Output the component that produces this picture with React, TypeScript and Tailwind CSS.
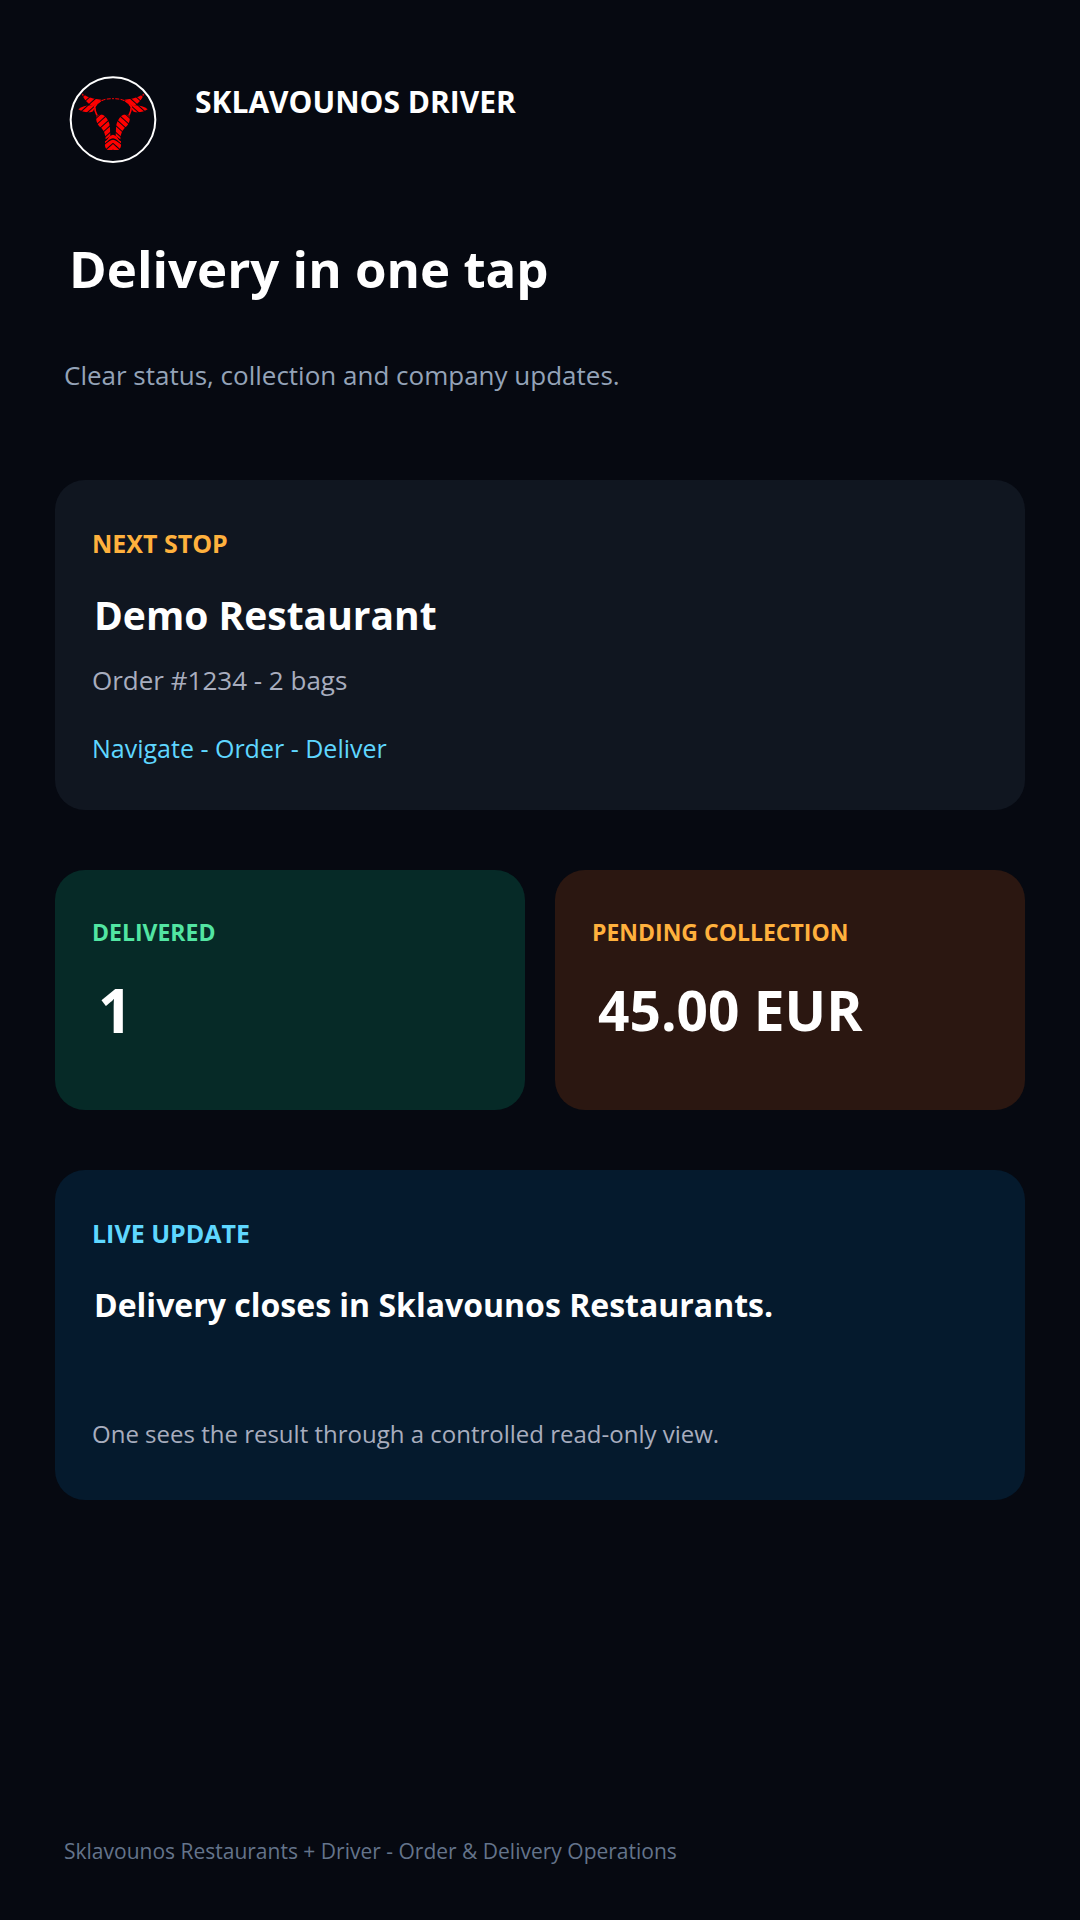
import type { ReactNode } from 'react'

function BullLogo() {
  return (
    <svg viewBox="0 0 264 264" className="size-22 shrink-0" role="img" aria-label="Sklavounos">
      <defs>
        <pattern id="stripes" width="15" height="15" patternUnits="userSpaceOnUse" patternTransform="rotate(-42)">
          <rect width="15" height="12" fill="#ff0000" />
        </pattern>
        <g id="half">
          <path d="M38 52 C50 62 72 70 104 72 C92 77 84 84 80 93 C68 90 60 84 54 78 C46 70 41 62 38 52Z" fill="url(#stripes)" />
          <path d="M28 100 C40 90 60 86 78 89 C77 97 74 103 70 107 C56 111 40 108 28 100Z" fill="url(#stripes)" />
          <path d="M95 74 C86 79 80 85 77 92 C77 102 80 110 84 118" fill="none" stroke="#ff0000" strokeWidth="5" />
          <path d="M98 74 C108 69 120 68 132 68" fill="none" stroke="#ff0000" strokeWidth="3" strokeDasharray="12 4" />
          <path d="M82 122 C90 111 106 114 113 127 C120 138 123 146 123 158 L124 180 L110 190 C109 174 105 164 97 156 C86 147 80 136 82 122Z" fill="url(#stripes)" />
          <path d="M108 196 C116 192 120 178 132 176 V187 C124 188 118 194 108 202Z" fill="#ff0000" />
          <path d="M108 203 C118 198 124 191 132 191 V222 H116 C109 217 107 210 108 203Z" fill="url(#stripes)" />
        </g>
      </defs>
      <circle cx="132" cy="131" r="127" fill="none" stroke="#ffffff" strokeWidth="6" />
      <use href="#half" />
      <use href="#half" transform="matrix(-1 0 0 1 264 0)" />
    </svg>
  )
}

function Card({ className, children }: { className: string, children: ReactNode }) {
  return <section className={`rounded-[30px] px-[37px] ${className}`}>{children}</section>
}

export default function App() {
  return (
    <main className="flex min-h-screen flex-col bg-[#060911] px-[55px] pt-[76px] pb-[51px] font-['Open_Sans','Noto_Sans',sans-serif] text-white">
      <header className="flex gap-[38px] pl-[14px]">
        <BullLogo />
        <p className="pt-2 text-[30px] leading-9 font-bold">SKLAVOUNOS DRIVER</p>
      </header>
      <h1 className="mt-16 pl-[14px] text-[51px] leading-[80px] font-bold">Delivery in one tap</h1>
      <p className="mt-[49px] pl-[9px] text-[26px] leading-9 text-[#94a3b8]">Clear status, collection and company updates.</p>

      <Card className="mt-[87px] bg-[#101620] pt-[45px] pb-11">
        <h2 className="text-[25px] leading-9 font-bold text-[#ffb13d]">NEXT STOP</h2>
        <p className="mt-6 pl-[2px] text-[39px] leading-[60px] font-bold">Demo Restaurant</p>
        <p className="mt-[17px] text-[26px] leading-9 text-[#a8adbe]">Order #1234 - 2 bags</p>
        <p className="mt-8 text-[25px] leading-9 text-[#5fd7ff]">Navigate - Order - Deliver</p>
      </Card>

      <div className="mt-[60px] grid grid-cols-2 gap-[30px]">
        <Card className="bg-[#062a27] pt-11 pb-[60px]">
          <h2 className="text-[23px] leading-9 font-bold text-[#52e5a2]">DELIVERED</h2>
          <p className="mt-5 pl-[6px] text-[60px] leading-[80px] font-bold">1</p>
        </Card>
        <Card className="bg-[#2b1711] pt-11 pb-[60px]">
          <h2 className="text-[23px] leading-9 font-bold text-[#ffb13d]">PENDING COLLECTION</h2>
          <p className="mt-5 pl-[6px] text-[55px] leading-[80px] font-bold">45.00 EUR</p>
        </Card>
      </div>

      <Card className="mt-[60px] bg-[#051a2d] pt-[45px] pb-12">
        <h2 className="text-[25px] leading-9 font-bold text-[#5fd7ff]">LIVE UPDATE</h2>
        <p className="mt-6 pl-[2px] text-[32px] leading-[60px] font-bold">Delivery closes in Sklavounos Restaurants.</p>
        <p className="mt-[81px] text-[24px] leading-9 text-[#a8adbe]">One sees the result through a controlled read-only view.</p>
      </Card>

      <footer className="mt-auto pl-[9px] text-[21px] leading-9 text-[#64748b]">
        Sklavounos Restaurants + Driver - Order &amp; Delivery Operations
      </footer>
    </main>
  )
}
